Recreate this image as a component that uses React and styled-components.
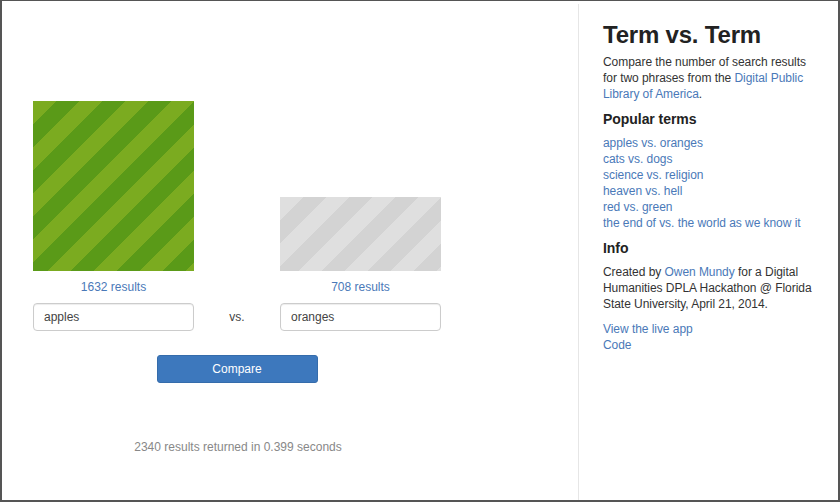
import styled, { createGlobalStyle } from "styled-components";

const GlobalStyle = createGlobalStyle`
    html, body {
        margin: 0;
        padding: 0;
        background: #ffffff;
    }
    body {
        font-family: "Liberation Sans", Arial, Helvetica, sans-serif;
        font-size: 12px;
        line-height: 16px;
        color: #333333;
    }
    * {
        box-sizing: border-box;
    }
`

const StyledFrame = styled.div`
    width: 840px;
    height: 502px;
    border-style: solid;
    border-color: #555555;
    border-width: 1px 2px 2px 2px;
    display: flex;
    flex-direction: row;
    background: #ffffff;
    overflow: hidden;
`

const StyledMain = styled.div`
    width: 576px;
    flex-shrink: 0;
    padding: 100px 0 0 31px;
`

const StyledCompare = styled.div`
    width: 408px;
    display: flex;
    flex-direction: column;
    align-items: center;
`

const StyledGrid = styled.div`
    display: grid;
    grid-template-columns: 161px 86px 161px;
    grid-template-rows: 170px 16px 28px;
    row-gap: 8px;
    width: 100%;
`

const StyledBar = styled.div`
    align-self: end;
    grid-column: ${(p) => p.$col};
    height: ${(p) => p.$height}px;
    background: ${(p) =>
        p.$active
            ? "repeating-linear-gradient(135deg, #7bab20 0 16.3px, #5a9a18 16.3px 32.6px)"
            : "repeating-linear-gradient(135deg, #dfdfdf 0 16.3px, #d3d3d3 16.3px 32.6px)"};
`

const StyledCount = styled.a`
    grid-column: ${(p) => p.$col};
    text-align: center;
    color: #4a79b8;
    text-decoration: none;
    font-size: 12px;
    line-height: 16px;
`

const StyledInput = styled.input`
    grid-column: ${(p) => p.$col};
    height: 28px;
    width: 100%;
    border: 1px solid #cccccc;
    border-radius: 4px;
    box-shadow: inset 0 1px 1px rgba(0, 0, 0, 0.075);
    padding: 0 10px;
    font-family: "Liberation Sans", Arial, sans-serif;
    font-size: 12px;
    color: #444444;
    outline: none;
`

const StyledVs = styled.div`
    grid-column: 2;
    display: flex;
    align-items: center;
    justify-content: center;
    font-size: 12px;
    color: #444444;
`

const StyledButton = styled.button`
    margin-top: 24px;
    width: 161px;
    height: 28px;
    background: #3d78bd;
    border: 1px solid #356cab;
    border-radius: 3px;
    color: #ffffff;
    font-family: "Liberation Sans", Arial, sans-serif;
    font-size: 12px;
    cursor: pointer;
`

const StyledFooter = styled.p`
    margin: 56px 0 0 2px;
    text-align: center;
    color: #888888;
    font-size: 12px;
    line-height: 16px;
`

const StyledSidebar = styled.div`
    flex: 1;
    margin-top: 3px;
    border-left: 1px solid #e6e6e6;
    padding: 18px 0 0 24px;
    letter-spacing: -0.05px;
`

const StyledTitle = styled.h1`
    margin: 0;
    font-size: 24px;
    line-height: 26px;
    font-weight: bold;
    letter-spacing: -0.2px;
    color: #222222;
`

const StyledText = styled.p`
    margin: ${(p) => p.$margin || "0"};
    white-space: nowrap;
    font-size: 12px;
    line-height: 16px;
    color: #333333;
`

const StyledHeading = styled.h2`
    margin: 9px 0 0 0;
    font-size: 14px;
    line-height: 17px;
    font-weight: bold;
    color: #222222;
`

const StyledLinkList = styled.ul`
    list-style: none;
    margin: ${(p) => p.$margin || "7px 0 0 0"};
    padding: 0;
`

const StyledLink = styled.a`
    color: #4a79b8;
    text-decoration: none;
`

const popular = [
    "apples vs. oranges",
    "cats vs. dogs",
    "science vs. religion",
    "heaven vs. hell",
    "red vs. green",
    "the end of vs. the world as we know it",
];

function App() {
    return (
        <>
            <GlobalStyle />
            <StyledFrame>

                <StyledMain>
                    <StyledCompare>
                        <StyledGrid>
                            <StyledBar $col={1} $height={170} $active />
                            <StyledBar $col={3} $height={74} />

                            <StyledCount $col={1} href="#">1632 results</StyledCount>
                            <StyledCount $col={3} href="#">708 results</StyledCount>

                            <StyledInput $col={1} type="text" defaultValue="apples" />
                            <StyledVs>vs.</StyledVs>
                            <StyledInput $col={3} type="text" defaultValue="oranges" />
                        </StyledGrid>

                        <StyledButton type="button">Compare</StyledButton>

                        <StyledFooter>2340 results returned in 0.399 seconds</StyledFooter>
                    </StyledCompare>
                </StyledMain>

                <StyledSidebar>
                    <StyledTitle>Term vs. Term</StyledTitle>
                    <StyledText $margin="6px 0 0 0">
                        Compare the number of search results
                        <br />
                        for two phrases from the <StyledLink href="#">Digital Public</StyledLink>
                        <br />
                        <StyledLink href="#">Library of America</StyledLink>.
                    </StyledText>

                    <StyledHeading>Popular terms</StyledHeading>
                    <StyledLinkList>
                        {popular.map((term) => (
                            <li key={term}>
                                <StyledLink href="#">{term}</StyledLink>
                            </li>
                        ))}
                    </StyledLinkList>

                    <StyledHeading>Info</StyledHeading>
                    <StyledText $margin="7px 0 0 0">
                        Created by <StyledLink href="#">Owen Mundy</StyledLink> for a Digital
                        <br />
                        Humanities DPLA Hackathon @ Florida
                        <br />
                        State University, April 21, 2014.
                    </StyledText>

                    <StyledLinkList $margin="9px 0 0 0">
                        <li><StyledLink href="#">View the live app</StyledLink></li>
                        <li><StyledLink href="#">Code</StyledLink></li>
                    </StyledLinkList>
                </StyledSidebar>

            </StyledFrame>
        </>
    )
}

export default App;
